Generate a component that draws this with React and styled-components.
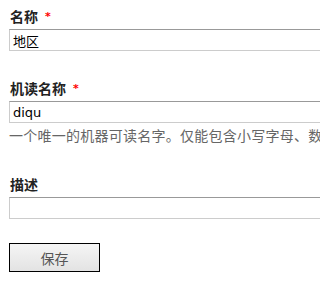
import React from "react";
import styled, { createGlobalStyle } from "styled-components";

const GlobalStyle = createGlobalStyle`
  html, body {
    margin: 0;
    padding: 0;
    background: #fff;
    overflow: hidden;
  }
  body {
    font-family: "Noto Sans CJK SC", "DejaVu Sans", sans-serif;
    color: #333;
  }
`;

const Form = styled.form`
  width: 420px;
  padding: 3px 0 0 9px;
  box-sizing: border-box;
`;

const Item = styled.div`
  display: flex;
  flex-direction: column;
  align-items: flex-start;
  margin-bottom: 24px;
`;

const Label = styled.label`
  display: block;
  height: 20px;
  margin: 3px 0 3px 1px;
  font-size: 14px;
  line-height: 20px;
  font-weight: bold;
  color: #222;
`;

const Required = styled.span`
  margin-left: 7px;
  color: #f00;
  font-family: "DejaVu Sans", sans-serif;
  font-size: 11px;
  vertical-align: 2px;
`;

const Input = styled.input`
  width: 400px;
  flex-shrink: 0;
  height: 22px;
  box-sizing: border-box;
  margin: 0;
  padding: 0 3px;
  border: 1px solid #ccc;
  border-top-color: #999;
  font-family: ${(p) => (p.$latin ? '"DejaVu Sans", sans-serif' : '"Noto Sans CJK SC", sans-serif')};
  font-size: 13px;
  color: #000;
  outline: none;
  background: #fff;
`;

const Description = styled.div`
  height: 22px;
  margin-top: 2px;
  font-size: 14px;
  letter-spacing: 0.25px;
  line-height: 20px;
  color: #666;
  white-space: nowrap;
`;

const SaveButton = styled.button`
  width: 91px;
  height: 29px;
  padding: 0;
  border: 1px solid #000;
  background: linear-gradient(to bottom, #f5f5f5, #e3e3e3);
  font-family: "Noto Sans CJK SC", sans-serif;
  font-size: 14px;
  color: #555;
  cursor: pointer;
`;

const fields = [
  { label: "名称", required: true, value: "地区" },
  {
    label: "机读名称",
    required: true,
    value: "diqu",
    latin: true,
    description: "一个唯一的机器可读名字。仅能包含小写字母、数",
  },
  { label: "描述", required: false, value: "" },
];

export default function App() {
  return (
    <>
      <GlobalStyle />
      <Form onSubmit={(e) => e.preventDefault()}>
        {fields.map((f) => (
          <Item key={f.label}>
            <Label>
              {f.label}
              {f.required && <Required>*</Required>}
            </Label>
            <Input defaultValue={f.value} $latin={f.latin} readOnly />
            {f.description && <Description>{f.description}</Description>}
          </Item>
        ))}
        <SaveButton type="submit">保存</SaveButton>
      </Form>
    </>
  );
}
